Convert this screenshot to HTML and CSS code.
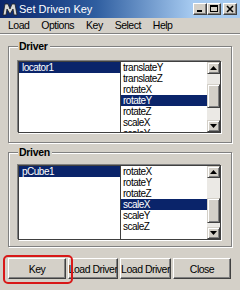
FILE: index.html
```html
<!DOCTYPE html>
<html lang="en">
<head>
    <meta charset="UTF-8">
    <title>Set Driven Key</title>
    <link rel="stylesheet" href="styles.css">
</head>
<body>
    <div class="window">
        <div class="titlebar">
            <svg class="app-icon" viewBox="0 0 16 16">
                <path d="M1 14 L3 3 L6 3 L8 8 L10 3 L13 3 L15 14 L12 14 L11 8 L8 13 L5 8 L4 14 Z" fill="#d8d8d8" stroke="#202020" stroke-width="0.8"/>
            </svg>
            <span class="title">Set Driven Key</span>
            <div class="title-btns">
                <div class="title-btn">
                    <svg viewBox="0 0 12 10"><rect x="3" y="6" width="5" height="2" fill="#000"/></svg>
                </div>
                <div class="title-btn">
                    <svg viewBox="0 0 12 10"><rect x="2.5" y="1.5" width="7" height="6" fill="none" stroke="#000"/><rect x="2" y="1" width="8" height="2" fill="#000"/></svg>
                </div>
                <div class="title-btn close">
                    <svg viewBox="0 0 12 10"><path d="M3 2 L9 8 M9 2 L3 8" stroke="#000" stroke-width="1.6"/></svg>
                </div>
            </div>
        </div>

        <div class="menubar">
            <span>Load</span>
            <span>Options</span>
            <span>Key</span>
            <span>Select</span>
            <span>Help</span>
        </div>
        <div class="separator"></div>

        <!-- Driver -->
        <div class="group driver">
            <div class="group-label">Driver</div>
            <div class="lists">
                <div class="list objects">
                    <div class="row sel">locator1</div>
                </div>
                <div class="list attrs">
                    <div class="row">translateY</div>
                    <div class="row">translateZ</div>
                    <div class="row">rotateX</div>
                    <div class="row sel">rotateY</div>
                    <div class="row">rotateZ</div>
                    <div class="row">scaleX</div>
                    <div class="row">scaleY</div>
                </div>
                <div class="scrollbar">
                    <div class="sb-btn"><svg viewBox="0 0 7 4"><path d="M0 4 L3.5 0 L7 4 Z" fill="#000"/></svg></div>
                    <div class="sb-track" style="height: 10px"></div>
                    <div class="sb-thumb" style="height: 24px"></div>
                    <div class="sb-track fill"></div>
                    <div class="sb-btn"><svg viewBox="0 0 7 4"><path d="M0 0 L3.5 4 L7 0 Z" fill="#000"/></svg></div>
                </div>
            </div>
        </div>

        <!-- Driven -->
        <div class="group driven">
            <div class="group-label">Driven</div>
            <div class="lists">
                <div class="list objects">
                    <div class="row sel">pCube1</div>
                </div>
                <div class="list attrs">
                    <div class="row">rotateX</div>
                    <div class="row">rotateY</div>
                    <div class="row">rotateZ</div>
                    <div class="row sel">scaleX</div>
                    <div class="row">scaleY</div>
                    <div class="row">scaleZ</div>
                </div>
                <div class="scrollbar">
                    <div class="sb-btn"><svg viewBox="0 0 7 4"><path d="M0 4 L3.5 0 L7 4 Z" fill="#000"/></svg></div>
                    <div class="sb-track" style="height: 20px"></div>
                    <div class="sb-thumb" style="height: 25px"></div>
                    <div class="sb-track fill"></div>
                    <div class="sb-btn"><svg viewBox="0 0 7 4"><path d="M0 0 L3.5 4 L7 0 Z" fill="#000"/></svg></div>
                </div>
            </div>
        </div>

        <div class="buttons">
            <div class="btn key"><span>Key</span></div>
            <div class="btn load"><span>Load Driver</span></div>
            <div class="btn load2"><span>Load Driver</span></div>
            <div class="btn close-btn"><span>Close</span></div>
            <div class="highlight"></div>
        </div>
    </div>
</body>
</html>
```

FILE: styles.css
```css
body {
    margin: 0;
    background-color: #d4d0c8;
}

.window {
    width: 240px;
    height: 290px;
    background-color: #d4d0c8;
    overflow: hidden;
    font-family: "Liberation Sans", Arial, sans-serif;
    font-size: 10.5px;
    color: #000;
}

/* title bar */
.titlebar {
    height: 18px;
    display: flex;
    align-items: center;
    background: linear-gradient(to right, #0a246a 0%, #2f5ea0 40%, #a6caf0 80%, #a6caf0 100%);
    color: #fff;
}

.app-icon {
    width: 16px;
    height: 16px;
    margin-left: 2px;
    margin-right: 1px;
}

.title {
    flex: 1;
    font-size: 11px;
    line-height: 18px;
}

.title-btns {
    display: flex;
    margin-right: 3px;
}

.title-btn {
    width: 14px;
    height: 12px;
    box-sizing: border-box;
    background-color: #d4d0c8;
    border: 1px solid;
    border-color: #fff #404040 #404040 #fff;
    box-shadow: inset -1px -1px 0 #808080;
    display: flex;
}

.title-btn svg {
    width: 12px;
    height: 10px;
}

.title-btn.close {
    margin-left: 2px;
}

/* menu */
.menubar {
    height: 15px;
    display: flex;
    gap: 12px;
    padding-left: 8px;
    font-size: 10.5px;
    letter-spacing: -0.5px;
    line-height: 15px;
}

.separator {
    border-top: 1px solid #808080;
    border-bottom: 1px solid #fff;
}

/* group boxes */
.group {
    margin: 0 8px;
    border: 1px solid #808080;
    box-shadow: inset 1px 1px 0 #fff, 1px 1px 0 #fff;
    padding: 0 0 9px 9px;
}

.group.driver {
    margin-top: 11px;
}

.group.driven {
    margin-top: 9px;
    padding-bottom: 6px;
}

.group-label {
    display: block;
    width: fit-content;
    height: 12px;
    line-height: 12px;
    margin-top: -7px;
    padding: 0 2px 0 1px;
    background-color: #d4d0c8;
    font-size: 10.5px;
    font-weight: bold;
    letter-spacing: -0.3px;
}

.lists {
    display: flex;
    width: 203px;
    height: 72px;
    box-sizing: border-box;
    margin-top: 9px;
    border: 1px solid #404040;
    box-shadow: -1px -1px 0 #808080, 1px 1px 0 #fff;
    background-color: #fff;
}

.driven .lists {
    height: 75px;
    margin-top: 7px;
}

.list {
    overflow: hidden;
    font-size: 10px;
    letter-spacing: -0.5px;
}

.list.objects {
    width: 101px;
    border-right: 1px solid #404040;
}

.list.objects .row {
    padding-left: 3px;
}

.list.attrs {
    flex: 1;
}

.list.attrs .row {
    padding-left: 2px;
}

.row {
    height: 11px;
    line-height: 11px;
    white-space: nowrap;
}

.row.sel {
    background-color: #0a246a;
    color: #fff;
}

/* scrollbar */
.scrollbar {
    width: 13px;
    display: flex;
    flex-direction: column;
}

.sb-btn,
.sb-thumb {
    box-sizing: border-box;
    background-color: #d4d0c8;
    border: 1px solid;
    border-color: #d4d0c8 #404040 #404040 #d4d0c8;
    box-shadow: inset 1px 1px 0 #fff, inset -1px -1px 0 #808080;
}

.sb-btn {
    height: 12px;
    display: flex;
    align-items: center;
    justify-content: center;
}

.sb-btn svg {
    width: 7px;
    height: 4px;
}

.sb-track {
    background-color: #ebe9e5;
}

.sb-track.fill {
    flex: 1;
}

/* bottom buttons */
.buttons {
    position: relative;
    display: flex;
    gap: 2px;
    margin-top: 11px;
    padding-left: 8px;
}

.btn {
    height: 21px;
    box-sizing: border-box;
    display: flex;
    align-items: center;
    justify-content: center;
    overflow: hidden;
    white-space: nowrap;
    border: 1px solid;
    border-color: #fff #404040 #404040 #fff;
    box-shadow: inset -1px -1px 0 #808080;
    font-size: 10.5px;
    letter-spacing: -0.5px;
}

.btn span {
    flex-shrink: 0;
}

.btn.key { width: 58px; }
.btn.load { width: 50px; }
.btn.load2 { width: 51px; }
.btn.close-btn { width: 58px; }

.highlight {
    position: absolute;
    left: 3px;
    top: -3px;
    width: 70px;
    height: 29px;
    box-sizing: border-box;
    border: 2px solid #d81818;
    border-radius: 5px;
}
```
